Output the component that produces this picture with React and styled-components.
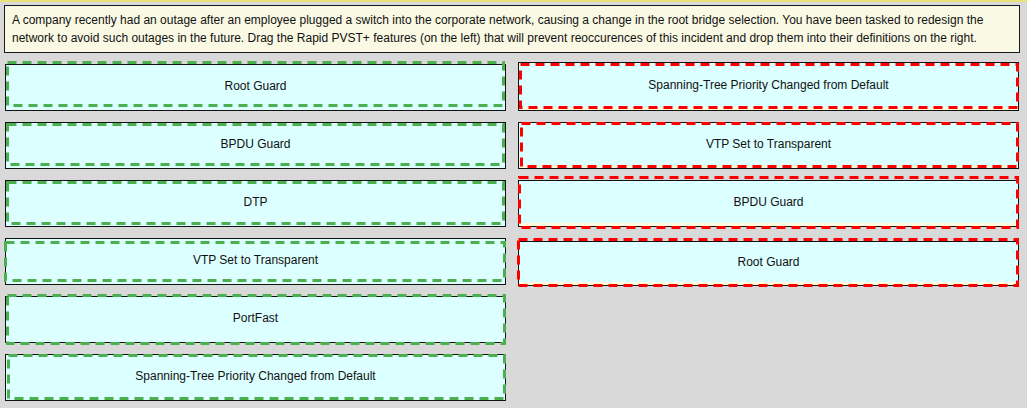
import React from 'react';
import styled, { createGlobalStyle } from 'styled-components';

const GlobalStyle = createGlobalStyle`
  html, body {
    margin: 0;
    padding: 0;
    background: #d9d9d9;
    font-family: "Liberation Sans", Arial, sans-serif;
  }
`;

// outline offsets: where each dragged tile's dashed frame sits relative to its slot
const features = [
  { label: 'Root Guard', outline: { l: 1, t: -3, r: -1, b: -4 } },
  { label: 'BPDU Guard', outline: { l: 1, t: 1, r: -1, b: -3 } },
  { label: 'DTP', outline: { l: 1, t: 1, r: -1, b: -2 } },
  { label: 'VTP Set to Transparent', outline: { l: -1, t: 3, r: 0, b: -3 } },
  { label: 'PortFast', outline: { l: 1, t: -2, r: 0, b: 2 } },
  { label: 'Spanning-Tree Priority Changed from Default', outline: { l: 2, t: 0, r: 0, b: -1 } },
];

const definitions = [
  { label: 'Spanning-Tree Priority Changed from Default', top: -2, height: 49, outline: { l: 1, t: 1, r: 0, b: -2 } },
  { label: 'VTP Set to Transparent', top: 0, height: 47, outline: { l: 2, t: 0, r: 0, b: -1 } },
  { label: 'BPDU Guard', top: 0, height: 47, outline: { l: 0, t: -4, r: 0, b: 2 } },
  { label: 'Root Guard', top: 3, height: 45, outline: { l: -1, t: -3, r: 0, b: 1 } },
];

const Page = styled.div`
  border-top: 2px solid #ebe37a;
  padding: 3px 7px 7px 4px;
`;

const Prompt = styled.div`
  background: #f9f9e4;
  border: 1px solid #1a1a1a;
  padding: 5px 7px 5px 7px;
  font-size: 12px;
  line-height: 18px;
  color: #111;
`;

const Board = styled.div`
  display: grid;
  grid-template-columns: 501px 501px;
  column-gap: 12px;
  margin-top: 11px;
  padding-left: 1px;
`;

const Column = styled.div`
  display: flex;
  flex-direction: column;
  gap: 11px;
`;

const Slot = styled.div`
  position: relative;
  box-sizing: border-box;
  height: ${p => p.$height || 47}px;
  margin-top: ${p => p.$top || 0}px;
  padding-bottom: 3px;
  background: #dcffff;
  border: 1px solid #111;
  box-shadow: ${p => (p.$target ? 'inset 0 -3px 0 #fffbdc' : 'none')};
  display: flex;
  align-items: center;
  justify-content: center;
  font-size: 12px;
  color: #111;
`;

const FrameBox = styled.span`
  position: absolute;
  pointer-events: none;

  svg {
    display: block;
    overflow: visible;
  }
`;

const Frame = ({ color, o }) => (
  <FrameBox style={{ left: o.l - 1, top: o.t - 1, right: -o.r - 1, bottom: -o.b - 1 }}>
    <svg width="100%" height="100%">
      <rect
        x="1.5"
        y="1.5"
        width="calc(100% - 3px)"
        height="calc(100% - 3px)"
        fill="none"
        stroke={color}
        strokeWidth="3"
        strokeDasharray="9 6"
      />
    </svg>
  </FrameBox>
);

export default function App() {
  return (
    <>
      <GlobalStyle />
      <Page>
        <Prompt>
          A company recently had an outage after an employee plugged a switch into the corporate network, causing a change in the root bridge selection. You have been tasked to redesign the
          <br />
          network to avoid such outages in the future. Drag the Rapid PVST+ features (on the left) that will prevent reoccurences of this incident and drop them into their definitions on the right.
        </Prompt>
        <Board>
          <Column>
            {features.map(f => (
              <Slot key={f.label}>
                {f.label}
                <Frame color="#4caf50" o={f.outline} />
              </Slot>
            ))}
          </Column>
          <Column>
            {definitions.map((d, i) => (
              <Slot key={i} $target $top={d.top} $height={d.height}>
                {d.label}
                <Frame color="#ff0000" o={d.outline} />
              </Slot>
            ))}
          </Column>
        </Board>
      </Page>
    </>
  );
}
